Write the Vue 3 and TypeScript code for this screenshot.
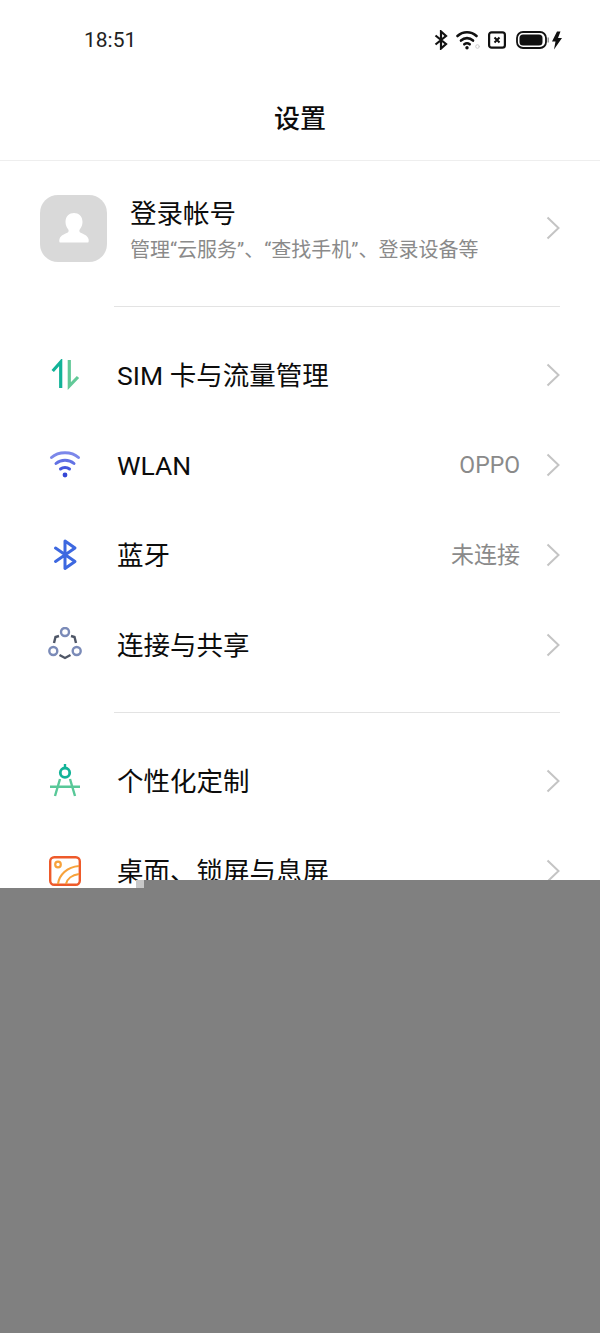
<script setup lang="ts">
interface Row {
  id: string
  label: string
  value?: string
}

const networkRows: Row[] = [
  { id: 'sim', label: 'SIM 卡与流量管理' },
  { id: 'wlan', label: 'WLAN', value: 'OPPO' },
  { id: 'bt', label: '蓝牙', value: '未连接' },
  { id: 'share', label: '连接与共享' }
]

const displayRows: Row[] = [
  { id: 'theme', label: '个性化定制' },
  { id: 'desktop', label: '桌面、锁屏与息屏' }
]
</script>

<template>
  <div class="page">
    <div class="screen">
      <div class="status-bar">
        <span class="time">18:51</span>
        <div class="status-icons">
          <svg width="14" height="20" viewBox="0 0 14 20" fill="none" stroke="#111" stroke-width="2.2">
            <path d="M1.500 5.500 12 14 7 18.500V1.500L12 6 1.500 14.500" />
          </svg>
          <svg width="24" height="20" viewBox="0 0 24 20" fill="none" stroke="#111" stroke-width="2.600" stroke-linecap="round">
            <path d="M1.500 6C7 1 15 1 20.500 6" />
            <path d="M5 10.500C8.500 7.300 13.500 7.300 17 10.500" />
            <path d="M8.300 14.300C10 13 12 13 13.700 14.300" />
            <circle cx="11" cy="17.800" r="1.700" fill="#111" stroke="none" />
            <circle cx="21.500" cy="16.500" r="1.800" fill="none" stroke="#ccc" stroke-width="1" />
          </svg>
          <svg width="18" height="18" viewBox="0 0 18 18" fill="none" stroke="#111">
            <rect x="1.100" y="1.300" width="15.800" height="15.400" rx="2.500" stroke-width="2.200" />
            <path d="M6.500 6.500 11.500 11.500M11.500 6.500 6.500 11.500" stroke-width="2" />
          </svg>
          <svg class="battery" width="46" height="20" viewBox="0 0 46 20" fill="none">
            <rect x="1" y="2" width="29" height="16" rx="6" stroke="#111" stroke-width="1.800" />
            <rect x="3.500" y="4.500" width="23" height="11" rx="3.500" fill="#111" />
            <rect x="31.500" y="7.500" width="1.500" height="5" fill="#999" />
            <path d="M41 1.500 36 11.500H39.500L38 19.500 46 8H42L44.500 1.500Z" fill="#111" />
          </svg>
        </div>
      </div>

      <header class="title-bar">设置</header>

      <div class="account">
        <div class="avatar">
          <svg width="32" height="32" viewBox="0 0 32 32" fill="#fff">
            <path d="M16 1C11.500 1 7.500 4 7.500 10c0 3 1.300 5.600 2.800 7.400.7 1.200.4 2.600-1 3.400C6.500 22.300 2.500 23.500 1.500 27c-.4 1.300-.3 3.500.5 3.500h28c.8 0 .9-2.200.5-3.500-1-3.500-5-4.700-7.800-6.200-1.400-.8-1.700-2.200-1-3.400 1.500-1.800 2.800-4.400 2.800-7.400C24.500 4 20.500 1 16 1Z" />
          </svg>
        </div>
        <div class="account-text">
          <div class="account-name">登录帐号</div>
          <div class="account-desc">管理“云服务”、“查找手机”、登录设备等</div>
        </div>
        <svg class="chevron" width="14" height="24" viewBox="0 0 14 24" fill="none" stroke="#c4c4c4" stroke-width="2">
          <path d="M1.500 1.500 12.500 12 1.500 22.500" />
        </svg>
      </div>

      <div class="divider first"></div>

      <div class="group">
        <div v-for="row in networkRows" :key="row.id" class="row">
          <div class="row-icon">
            <svg v-if="row.id === 'sim'" width="32" height="32" viewBox="0 0 32 32" fill="none" stroke-width="3.200">
              <path d="M3.700 12 11.700 3V29" stroke="#12b398" />
              <path d="M20.300 1V27L29 18" stroke="#62c998" />
            </svg>
            <svg v-else-if="row.id === 'wlan'" width="32" height="32" viewBox="0 0 32 32" fill="none" stroke-linecap="round" stroke-width="3">
              <path d="M2.500 8.500C9.500 2 22.500 2 29.500 8.500" stroke="#7b87ea" />
              <path d="M7 14.500C12 10 20 10 25 14.500" stroke="#6272e4" />
              <path d="M11.500 20C14 18 18 18 20.500 20" stroke="#4557dd" />
              <circle cx="16" cy="26" r="2.400" fill="#3547d6" />
            </svg>
            <svg v-else-if="row.id === 'bt'" width="32" height="32" viewBox="0 0 32 32" fill="none" stroke="#3d68e0" stroke-width="3" stroke-linecap="round" stroke-linejoin="round">
              <path d="M6.500 9 26 22.500 16 29.500V2L26 9 6.500 22.500" />
            </svg>
            <svg v-else width="34" height="36" viewBox="0 0 34 36" fill="none">
              <circle cx="17" cy="5" r="4" stroke="#7b8bb8" stroke-width="2.400" />
              <circle cx="5.300" cy="24" r="4" stroke="#7b8bb8" stroke-width="2.400" />
              <circle cx="28.700" cy="24" r="4" stroke="#7b8bb8" stroke-width="2.400" />
              <path d="M6 16 7.500 10 11 9M28 16 26.500 10 23 9M11.500 28 17 31 22.500 28" stroke="#4e5666" stroke-width="2.400" />
            </svg>
          </div>
          <span class="row-label" :class="{ latin: row.id === 'wlan' }">{{ row.label }}</span>
          <span v-if="row.value" class="row-value" :class="{ latin: row.id === 'wlan' }">{{ row.value }}</span>
          <svg class="chevron" width="14" height="24" viewBox="0 0 14 24" fill="none" stroke="#c4c4c4" stroke-width="2">
            <path d="M1.500 1.500 12.500 12 1.500 22.500" />
          </svg>
        </div>
      </div>

      <div class="divider second"></div>

      <div class="group">
        <div v-for="row in displayRows" :key="row.id" class="row">
          <div class="row-icon">
            <svg v-if="row.id === 'theme'" width="32" height="34" viewBox="0 0 32 34" fill="none" stroke-width="2.400">
              <path d="M11 15 6 32M21 15 26 32M1 22.700H31" stroke="#58c898" />
              <path d="M16 0V3" stroke="#12b398" />
              <circle cx="16" cy="8.700" r="4.700" stroke="#12b398" stroke-width="2.800" />
            </svg>
            <svg v-else width="32" height="30" viewBox="0 0 32 30" fill="none">
              <rect x="1.200" y="1.200" width="29.600" height="27.600" rx="4" stroke="#ee5a2a" stroke-width="2.400" />
              <circle cx="9" cy="8.500" r="2.800" stroke="#f7a23b" stroke-width="2.200" />
              <path d="M9 28C10 19 18 11 30 10M17 28C18 23 23 19 30 18" stroke="#f7a23b" stroke-width="2.200" />
            </svg>
          </div>
          <span class="row-label">{{ row.label }}</span>
          <svg class="chevron" width="14" height="24" viewBox="0 0 14 24" fill="none" stroke="#c4c4c4" stroke-width="2">
            <path d="M1.500 1.500 12.500 12 1.500 22.500" />
          </svg>
        </div>
      </div>
    </div>

    <div class="blank">
      <div class="notch"></div>
      <div class="tab"></div>
    </div>
  </div>
</template>

<style scoped>
.page {
  width: 600px;
  height: 1333px;
  display: flex;
  flex-direction: column;
  overflow: hidden;
  background: #fff;
  font-family: "Roboto", "Noto Sans CJK SC", sans-serif;
  color: #0c0c0c;
}

.screen {
  height: 888px;
  overflow: hidden;
  flex: none;
}

.status-bar {
  height: 80px;
  display: flex;
  align-items: center;
  justify-content: space-between;
  padding: 0 38px 0 84px;
  box-sizing: border-box;
}

.time {
  font-size: 21px;
  color: #222;
}

.status-icons {
  display: flex;
  align-items: center;
  gap: 8px;
}

.battery {
  margin-left: 2px;
}

.title-bar {
  height: 81px;
  box-sizing: border-box;
  border-bottom: 1px solid #eeeeee;
  display: flex;
  justify-content: center;
  align-items: center;
  font-size: 26px;
  font-weight: 500;
  padding-bottom: 8px;
}

.account {
  height: 145px;
  display: flex;
  align-items: center;
  padding: 0 40px 11px;
  box-sizing: border-box;
}

.avatar {
  width: 67px;
  height: 67px;
  border-radius: 18px;
  background: #d9d9d9;
  display: flex;
  align-items: center;
  justify-content: center;
  flex: none;
  margin-right: 23px;
}

.account-text {
  flex: 1;
  padding-top: 4px;
}

.account-name {
  font-size: 26.500px;
  line-height: 36px;
}

.account-desc {
  font-size: 20px;
  line-height: 28px;
  margin-top: 4px;
  color: #8a8a8a;
}

.chevron {
  flex: none;
}

.divider {
  height: 1px;
  background: #e3e3e3;
  margin: 0 40px 0 114px;
}

.divider.first {
  margin-bottom: 23px;
}

.divider.second {
  margin-top: 22px;
  margin-bottom: 23px;
}

.row {
  height: 90px;
  display: flex;
  align-items: center;
  padding: 0 40px 0 48px;
  box-sizing: border-box;
}

.row-icon {
  width: 34px;
  display: flex;
  justify-content: center;
  flex: none;
  margin-right: 35px;
}

.row-label {
  flex: 1;
  font-size: 26.500px;
  padding-bottom: 4px;
}

.row-value {
  font-size: 23px;
  color: #8a8a8a;
  margin-right: 26px;
  padding-bottom: 4px;
}

.row-label.latin,
.row-value.latin {
  padding-bottom: 0;
}

.blank {
  flex: 1;
  background: #808080;
  position: relative;
}

.notch {
  position: absolute;
  left: 136px;
  top: -8px;
  width: 8px;
  height: 8px;
  background: #c8c8c8;
}

.tab {
  position: absolute;
  left: 144px;
  right: 0;
  top: -8px;
  height: 8px;
  background: #808080;
}
</style>
